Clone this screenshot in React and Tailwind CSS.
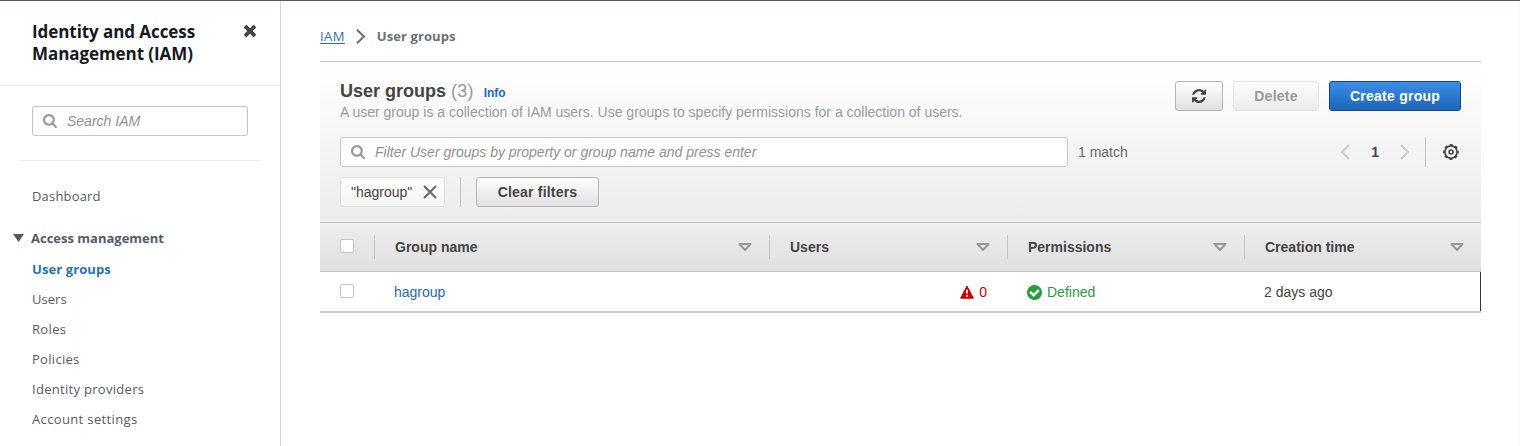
import React from "react";

const ARIAL = "font-['Liberation_Sans',Arial,sans-serif]";

const SearchIcon = () => (
  <svg className="h-[14px] w-[14px] shrink-0" viewBox="64 128 1664 1664" fill="#999">
    <path d="M1216 832q0-185-131.5-316.5t-316.5-131.5-316.5 131.5-131.5 316.5 131.5 316.5 316.5 131.5 316.5-131.5 131.5-316.5zm512 832q0 52-38 90t-90 38q-54 0-90-38l-343-342q-179 124-399 124-143 0-273.5-55.5t-225-150-150-225-55.5-273.5 55.5-273.5 150-225 225-150 273.5-55.5 273.5 55.5 225 150 150 225 55.5 273.5q0 220-124 399l343 343q37 37 37 90z" />
  </svg>
);

const CloseIcon = () => (
  <svg className="mt-[24px] h-[12px] w-[12px] shrink-0" viewBox="302 366 1188 1188" fill="#444">
    <path d="M1490 1322q0 40-28 68l-136 136q-28 28-68 28t-68-28l-294-294-294 294q-28 28-68 28t-68-28l-136-136q-28-28-28-68t28-68l294-294-294-294q-28-28-28-68t28-68l136-136q28-28 68-28t68 28l294 294 294-294q28-28 68-28t68 28l136 136q28 28 28 68t-28 68l-294 294 294 294q28 28 28 68z" />
  </svg>
);

const RefreshIcon = () => (
  <svg className="h-[14px] w-[14px]" viewBox="0 0 1536 1536" fill="#444">
    <path d="M1511 928q0 5-1 7-64 268-268 434.5t-478 166.5q-146 0-282.5-55t-243.5-157l-129 129q-19 19-45 19t-45-19-19-45v-448q0-26 19-45t45-19h448q26 0 45 19t19 45-19 45l-137 137q71 66 161 102t187 36q134 0 250-65t186-179q11-17 53-117 8-23 30-23h192q13 0 22.5 9.5t9.5 22.5zm25-800v448q0 26-19 45t-45 19h-448q-26 0-45-19t-19-45 19-45l138-138q-148-137-349-137-134 0-250 65t-186 179q-11 17-53 117-8 23-30 23h-199q-13 0-22.5-9.5t-9.5-22.5v-7q65-268 270-434.5t480-166.5q146 0 284 55.5t245 156.5l130-129q19-19 45-19t45 19 19 45z" />
  </svg>
);

const GearIcon = () => (
  <svg className="h-4 w-4" viewBox="0 0 16 16" fill="none" stroke="#444">
    <circle cx="8" cy="8" r="6.1" strokeWidth="1.6" />
    <circle cx="8" cy="8" r="7.1" strokeWidth="1.6" strokeDasharray="3 2.576" strokeDashoffset="1.5" />
    <circle cx="8" cy="8" r="2" strokeWidth="1.5" />
  </svg>
);

const SortIcon = () => (
  <svg className="h-[8px] w-[14px]" viewBox="0 0 14 8" fill="none" stroke="#999" strokeWidth="2" strokeLinejoin="round">
    <path d="M1.5 1h11L7 7z" />
  </svg>
);

const WarningIcon = () => (
  <svg className="h-[14px] w-[14px]" viewBox="0 0 14 14">
    <path d="M7 1 13.4 13.2H.6z" fill="#c00" stroke="#c00" strokeLinejoin="round" />
    <path d="M6 4.8h2l-.3 4H6.300zM6.100 10h1.8v1.8H6.100z" fill="#fff" />
  </svg>
);

const CheckIcon = () => (
  <svg className="h-[15px] w-[15px]" viewBox="128 128 1536 1536" fill="#249d3d">
    <path d="M1412 734q0-28-18-46l-91-90q-19-19-45-19t-45 19l-408 407-226-226q-19-19-45-19t-45 19l-91 90q-18 18-18 46 0 27 18 45l362 362q19 19 45 19 27 0 46-19l543-543q18-18 18-45zm252 162q0 209-103 385.5t-279.5 279.5-385.5 103-385.5-103-279.5-279.5-103-385.5 103-385.5 279.5-279.5 385.5-103 385.5 103 279.5 279.5 103 385.5z" />
  </svg>
);

const Chevron = ({ left }) => (
  <svg className="h-[16px] w-[10px]" viewBox="0 0 10 16" fill="none" stroke="#ccc" strokeWidth="2">
    <path d={left ? "M9 1 2 8l7 7" : "M1 1l7 7-7 7"} />
  </svg>
);

const Checkbox = () => <span className="block h-[14px] w-[14px] rounded-[2px] border border-[#c4c4c4] bg-white" />;

const links = [
  { label: "Users", cls: "tracking-[0.05px]" },
  { label: "Roles", cls: "tracking-[0.35px]" },
  { label: "Policies", cls: "tracking-[0.3px]" },
  { label: "Identity providers", cls: "tracking-[0.3px]" },
  { label: "Account settings", cls: "tracking-[0.36px]" },
];

function Sidebar() {
  return (
    <aside className="flex w-[281px] shrink-0 flex-col border-r border-[#d1d5d6] font-['Open_Sans','Noto_Sans',sans-serif] text-[13px] text-[#545b64]">
      <div className="flex h-[85px] justify-between border-b border-[#eaeded] pl-8 pr-6">
        <h2 className="pt-5 text-[17px] font-bold leading-[22px] tracking-[-0.07px] text-[#16191f]">
          <span className="block whitespace-nowrap">Identity and Access</span>
          <span className="block whitespace-nowrap">Management (IAM)</span>
        </h2>
        <CloseIcon />
      </div>
      <div className="mx-5 flex h-[75px] flex-col border-b border-[#eaeded] px-3 pt-5">
        <div className={`flex h-[30px] w-[216px] items-center gap-[10px] rounded-[3px] border border-[#c4c4c4] bg-white pl-[10px] text-[14px] italic text-[#909090] ${ARIAL}`}>
          <SearchIcon />
          <span>Search IAM</span>
        </div>
      </div>
      <nav className="flex flex-col pt-[25px] leading-5">
        <a className="pl-8 tracking-[0.18px]">Dashboard</a>
        <div className="mt-[22px] flex items-center pl-[13px] font-bold">
          <svg className="mr-[7px] h-[8px] w-[11px]" viewBox="0 0 11 8" fill="#545b64">
            <path d="M0 0h11L5.500 8z" />
          </svg>
          <span>Access management</span>
        </div>
        <div className="mt-[11px] flex flex-col gap-[10px] pl-8">
          <a className="font-bold tracking-[0.1px] text-[#2074b9]">User groups</a>
          {links.map((l) => (
            <a key={l.label} className={l.cls}>{l.label}</a>
          ))}
        </div>
      </nav>
    </aside>
  );
}

const ColumnHead = ({ label, width }) => (
  <div className={`flex items-center ${width}`}>
    <span className="h-6 w-px bg-[#c4c4c4]" />
    <span className="ml-5 flex-1">{label}</span>
    <span className="mr-[17px]"><SortIcon /></span>
  </div>
);

export default function App() {
  return (
    <div className="flex h-[446px] w-[1520px] flex-col overflow-hidden border-t border-[#545b64] bg-white">
      <div className="flex flex-1">
        <Sidebar />
        <main className={`flex-1 border-r border-[#f7f7f7] pl-[39px] pr-[38px] text-[14px] text-[#444] ${ARIAL}`}>
          <div className="flex h-[60px] items-center pt-[11px] font-['Open_Sans','Noto_Sans',sans-serif] text-[13px]">
            <a className="tracking-[0.4px] text-[#2074b9] underline underline-offset-2">IAM</a>
            <svg className="ml-[11px] mr-[11px] h-[15px] w-[10px]" viewBox="0 0 10 15" fill="none" stroke="#687078" strokeWidth="2">
              <path d="M1 .8 8 7.500 1 14.200" />
            </svg>
            <span className="font-bold tracking-[0.1px] text-[#687078]">User groups</span>
          </div>
          <section>
            <div className="flex h-[162px] flex-col border-b border-t border-[#c4c4c4] bg-linear-to-b from-white to-[#ececec] px-5">
              <div className="flex justify-between pt-[19px]">
                <div className="-mt-px">
                  <div className="flex h-[22px] items-baseline leading-[22px]">
                    <h1 className="text-[18px] font-bold">User groups</h1>
                    <span className="ml-[5px] text-[18px] tracking-[0.2px] text-[#999]">(3)</span>
                    <a className="ml-[10px] text-[12px] font-bold text-[#2268c4]">Info</a>
                  </div>
                  <p className="leading-[20px] text-[#999]">
                    A user group is a collection of IAM users. Use groups to specify permissions for a collection of users.
                  </p>
                </div>
                <div className="flex h-[30px] gap-[10px] font-bold tracking-[0.25px]">
                  <button className="flex w-12 items-center justify-center rounded-[3px] border border-[#b4b4b4] bg-linear-to-b from-white to-[#e0e0e0]">
                    <RefreshIcon />
                  </button>
                  <button className="w-[86px] rounded-[3px] border border-[#e4e4e4] bg-linear-to-b from-[#fdfdfd] to-[#eaeaea] text-[#999]">Delete</button>
                  <button className="w-[132px] rounded-[3px] border border-[#12488a] bg-linear-to-b from-[#3c8de8] to-[#1d66b8] text-white">Create group</button>
                </div>
              </div>
              <div className="mt-[15px] flex h-[30px] items-center">
                <div className="flex h-[30px] w-[728px] items-center gap-[10px] rounded-[3px] border border-[#c4c4c4] bg-white pl-[10px] italic text-[#909090]">
                  <SearchIcon />
                  <span>Filter User groups by property or group name and press enter</span>
                </div>
                <span className="ml-[10px] text-[#666]">1 match</span>
                <div className="ml-auto flex items-center">
                  <Chevron left />
                  <span className="mx-[21px] font-bold">1</span>
                  <Chevron />
                  <span className="ml-[15px] mr-[17px] h-[30px] w-px bg-[#c4c4c4]" />
                  <span className="mr-[2px]"><GearIcon /></span>
                </div>
              </div>
              <div className="mt-[10px] flex h-[30px]">
                <div className="flex w-[105px] items-center justify-between rounded-[3px] border border-[#ddd] bg-linear-to-b from-white to-[#f4f4f4] pl-[10px] pr-[7px]">
                  <span>"hagroup"</span>
                  <svg className="h-[14px] w-[14px]" viewBox="0 0 14 14" stroke="#666" strokeWidth="2">
                    <path d="m1 1 12 12M13 1 1 13" />
                  </svg>
                </div>
                <span className="mx-[15px] w-px bg-[#c4c4c4]" />
                <button className="w-[123px] rounded-[3px] border border-[#b4b4b4] bg-linear-to-b from-white to-[#e0e0e0] font-bold tracking-[0.2px]">Clear filters</button>
              </div>
            </div>
            <div className="flex h-[49px] items-center border-b border-[#c4c4c4] bg-linear-to-b from-[#eee] to-[#dfdfdf] font-bold">
              <div className="w-[54px] pl-5 pb-[2px]"><Checkbox /></div>
              <ColumnHead label="Group name" width="w-[395px]" />
              <ColumnHead label="Users" width="w-[238px]" />
              <ColumnHead label="Permissions" width="w-[237px]" />
              <ColumnHead label="Creation time" width="w-[237px]" />
            </div>
            <div className="flex h-[41px] items-center border-b-2 border-[#ccc] bg-white">
              <div className="w-[74px] pb-[2px] pl-5"><Checkbox /></div>
              <div className="w-[395px] pt-[2px] text-[#2268c4]">hagroup</div>
              <div className="flex w-[198px] items-center justify-end gap-[5px] pt-[2px] text-[#c00]">
                <span className="-mt-px"><WarningIcon /></span>
                <span>0</span>
              </div>
              <div className="ml-10 flex w-[237px] items-center gap-[5px] pt-[2px] text-[#249d3d]">
                <CheckIcon />
                <span>Defined</span>
              </div>
              <div className="flex-1 pt-[2px]">2 days ago</div>
              <span className="h-full w-px bg-[#333]" />
            </div>
          </section>
        </main>
      </div>
    </div>
  );
}
